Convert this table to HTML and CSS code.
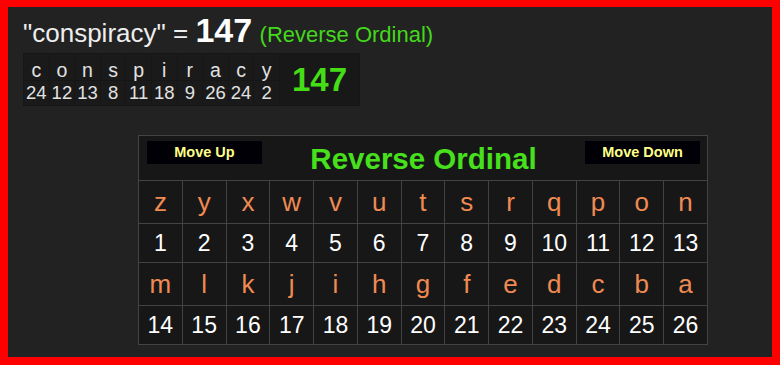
FILE: index.html
```html
<!DOCTYPE html>
<html>
<head>
<meta charset="utf-8">
<link rel="stylesheet" href="styles.css">
</head>
<body>
<div class="frame">
  <div class="headline"><span class="word">"conspiracy" = </span><span class="total">147</span> <span class="cipher">(Reverse Ordinal)</span></div>
  <table class="breakdown">
    <tr class="letters"><td>c</td><td>o</td><td>n</td><td>s</td><td>p</td><td>i</td><td>r</td><td>a</td><td>c</td><td>y</td><td class="sum" rowspan="2">147</td></tr>
    <tr class="values"><td>24</td><td>12</td><td>13</td><td>8</td><td>11</td><td>18</td><td>9</td><td>26</td><td>24</td><td>2</td></tr>
  </table>
  <table class="chart">
    <tr class="head">
      <td colspan="13">
        <div class="head-inner">
          <button class="move">Move Up</button>
          <span class="chart-title">Reverse Ordinal</span>
          <button class="move">Move Down</button>
        </div>
      </td>
    </tr>
    <tr class="let"><td>z</td><td>y</td><td>x</td><td>w</td><td>v</td><td>u</td><td>t</td><td>s</td><td>r</td><td>q</td><td>p</td><td>o</td><td>n</td></tr>
    <tr class="num"><td>1</td><td>2</td><td>3</td><td>4</td><td>5</td><td>6</td><td>7</td><td>8</td><td>9</td><td>10</td><td>11</td><td>12</td><td>13</td></tr>
    <tr class="let"><td>m</td><td>l</td><td>k</td><td>j</td><td>i</td><td>h</td><td>g</td><td>f</td><td>e</td><td>d</td><td>c</td><td>b</td><td>a</td></tr>
    <tr class="num"><td>14</td><td>15</td><td>16</td><td>17</td><td>18</td><td>19</td><td>20</td><td>21</td><td>22</td><td>23</td><td>24</td><td>25</td><td>26</td></tr>
  </table>
</div>
</body>
</html>
```
FILE: styles.css
```css
html, body {
  margin: 0;
  padding: 0;
}
body {
  font-family: "Liberation Sans", Arial, sans-serif;
  background: #222;
}
.frame {
  box-sizing: border-box;
  width: 780px;
  height: 365px;
  border-style: solid;
  border-color: #ff0000;
  border-width: 7px 8px 8px 8px;
  background: #222222;
  padding: 8px 0 0 15px;
  overflow: hidden;
}
.headline {
  height: 30px;
  line-height: 30px;
  white-space: nowrap;
  color: #eeeeee;
}
.word {
  font-size: 26px;
}
.total {
  font-size: 34px;
  font-weight: bold;
  color: #ffffff;
}
.cipher {
  font-size: 22px;
  color: #44d81c;
  margin-left: 3px;
}
.breakdown {
  margin-top: 8px;
  border-collapse: collapse;
  background: #1a1a1a;
  table-layout: fixed;
  width: 337px;
}
.breakdown td {
  border: 1px solid #161616;
  padding: 0;
  text-align: center;
  color: #e2e2e2;
  font-size: 18.5px;
}
.breakdown .letters td {
  height: 26px;
  vertical-align: bottom;
  line-height: 20px;
  font-size: 19.5px;
}
.breakdown .values td {
  height: 24px;
  line-height: 22px;
  vertical-align: middle;
}
.breakdown td.sum {
  width: 79px;
  font-size: 33px;
  font-weight: bold;
  color: #44dd16;
  line-height: 30px;
  vertical-align: middle;
  background: #181818;
}
.chart {
  margin: 29px 0 0 115px;
  border-collapse: collapse;
  background: #171717;
  table-layout: fixed;
  width: 570px;
}
.chart td {
  border: 1px solid #434343;
  padding: 0;
  text-align: center;
}
.chart .head td {
  height: 44px;
}
.head-inner {
  display: flex;
  align-items: center;
  justify-content: space-between;
  padding: 0 7px 0 8px;
  height: 44px;
}
.move {
  width: 115px;
  height: 23px;
  background: #000006;
  border: none;
  color: #ffff88;
  font-family: "Liberation Sans", Arial, sans-serif;
  font-size: 14.5px;
  font-weight: bold;
  padding: 0;
  margin-top: -12px;
}
.chart-title {
  font-size: 29.5px;
  font-weight: bold;
  color: #47e01c;
  line-height: 30px;
  margin-top: 2px;
}
.chart .let td {
  height: 42px;
  font-size: 26px;
  color: #ef8a52;
}
.chart .num td {
  height: 38px;
  font-size: 23px;
  color: #ffffff;
}
```
